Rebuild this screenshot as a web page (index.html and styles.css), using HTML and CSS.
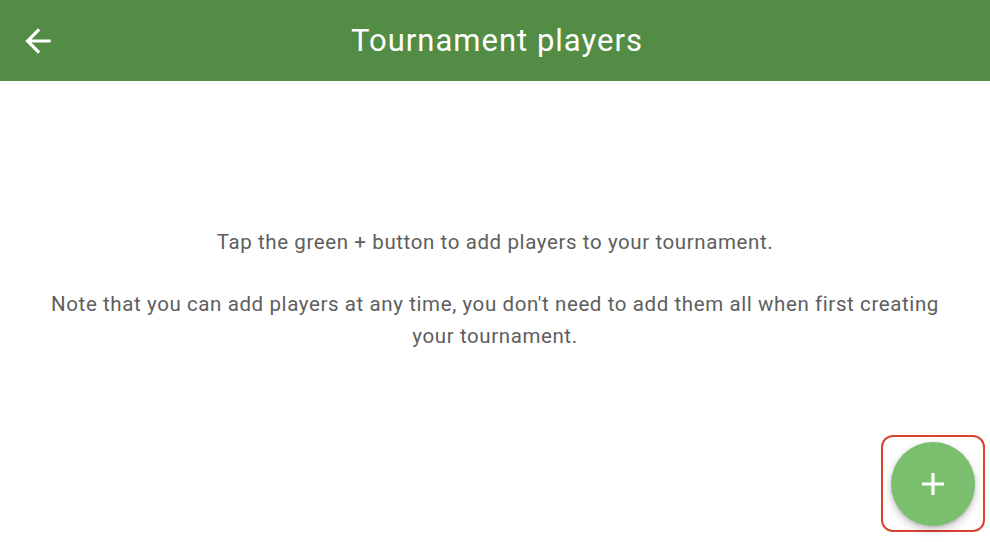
FILE: index.html
```html
<!DOCTYPE html>
<html lang="en">
<head>
<meta charset="utf-8">
<title>Tournament players</title>
<link rel="stylesheet" href="styles.css">
</head>
<body>
<div class="app">
  <header class="topbar">
    <button class="back" aria-label="Back">
      <svg width="38" height="38" viewBox="0 0 24 24"><path d="M20 11H7.83l5.59-5.59L12 4l-8 8 8 8 1.41-1.41L7.83 13H20v-2z" fill="#fff"/></svg>
    </button>
    <h1 class="title">Tournament players</h1>
    <span class="spacer"></span>
  </header>
  <main class="content">
    <p class="msg">Tap the green + button to add players to your tournament.</p>
    <p class="msg">Note that you can add players at any time, you don't need to add them all when first creating your tournament.</p>
  </main>
  <div class="fab-highlight">
    <button class="fab" aria-label="Add player">
      <svg width="38" height="38" viewBox="0 0 24 24"><path d="M19 13h-6v6h-2v-6H5v-2h6V5h2v6h6v2z" fill="#fff"/></svg>
    </button>
  </div>
</div>
</body>
</html>
```
FILE: styles.css
```css
* { box-sizing: border-box; }
html, body { margin: 0; padding: 0; }
body {
  width: 990px;
  height: 542px;
  overflow: hidden;
  background: #fff;
  font-family: Roboto, "Noto Sans", sans-serif;
}
.app {
  position: relative;
  height: 542px;
}
.topbar {
  height: 81px;
  background: #538d45;
  display: flex;
  align-items: center;
  padding: 0 14px 0 18px;
}
.back {
  width: 40px;
  height: 40px;
  border: 0;
  background: transparent;
  padding: 0;
  display: flex;
  align-items: center;
  justify-content: center;
}
.title {
  flex: 1;
  margin: 0;
  text-align: center;
  color: #fff;
  font-weight: 400;
  font-size: 31px;
  letter-spacing: 1px;
}
.spacer { width: 40px; }
.content {
  padding: 145px 40px 0;
  text-align: center;
  color: #5e5e5e;
  font-size: 20.5px;
  line-height: 32px;
  letter-spacing: 0.6px;
}
.msg { margin: 0 0 30px; }
.fab-highlight {
  position: absolute;
  left: 881px;
  top: 435px;
  width: 104px;
  height: 97px;
  border: 2px solid #d9432f;
  border-radius: 12px;
  display: flex;
  align-items: center;
  justify-content: center;
}
.fab {
  width: 84px;
  height: 84px;
  border-radius: 50%;
  border: 0;
  background: #7abf6e;
  box-shadow: 0 4px 8px rgba(0,0,0,0.22), 0 1px 3px rgba(0,0,0,0.15);
  display: flex;
  align-items: center;
  justify-content: center;
  padding: 0;
}
```
